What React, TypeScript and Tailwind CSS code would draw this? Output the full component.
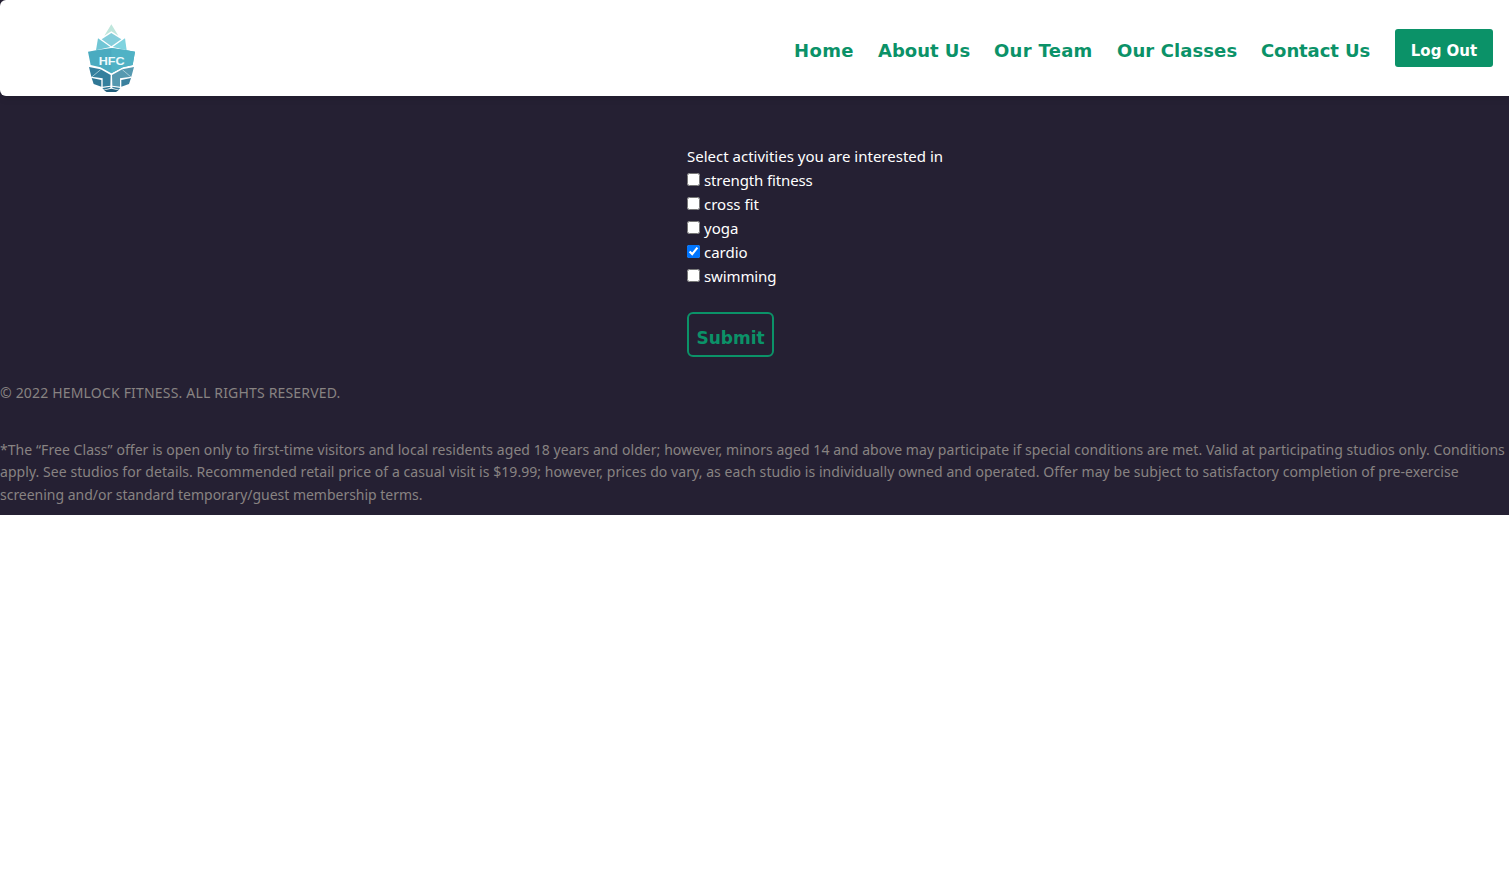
function Logo() {
  return (
    <svg viewBox="0 0 210 228" className="h-[76px] w-[70px]" aria-label="HFC">
      <polygon points="106,25 127,59 106,46 85,59" fill="#bfe6dc" />
      <polygon points="106,51 136,70 106,91 77,70" fill="#84cedb" />
      <polygon points="66,67 103,93 60,103" fill="#70c6d5" />
      <polygon points="147,67 110,93 152,103" fill="#7fd3df" />
      <polygon points="36,107 60,103 106,96 152,103 177,107 170,147 140,154 106,172 73,154 44,147" fill="#4aabc0" />
      <polygon points="106,96 152,103 177,107 170,147 140,154 106,172" fill="#50b2c5" />
      <polygon points="39,153 74,160 104,177 103,209 80,212 80,187 46,182" fill="#347f9d" />
      <polygon points="174,153 139,160 108,177 109,209 132,212 132,187 166,182" fill="#5599b0" />
      <polygon points="47,186 76,192 76,212 53,204" fill="#2f7795" />
      <polygon points="165,186 136,192 136,212 159,204" fill="#3b819e" />
      <polygon points="79,216 103,212 103,216 84,221" fill="#2f7795" />
      <polygon points="133,216 109,212 109,216 128,221" fill="#3b819e" />
      <polygon points="84,223 106,218 128,223 120,228 92,228" fill="#225f7c" />
      <path d="M46 184L74 161M166 184L139 161" stroke="#cfe5ec" strokeWidth="2" />
      <text x="107" y="147" textAnchor="middle" textLength="78" lengthAdjust="spacingAndGlyphs" fontFamily="Liberation Sans, sans-serif" fontWeight="700" fontSize="34" fill="#eefafc">
        HFC
      </text>
    </svg>
  );
}

const links = [
  { name: "Home", box: "w-[84px] tracking-[0.35px]" },
  { name: "About Us", box: "w-[116px] tracking-[0px]" },
  { name: "Our Team", box: "w-[123px] tracking-[0.3px]" },
  { name: "Our Classes", box: "w-[144px] tracking-[0.1px]" },
  { name: "Contact Us", box: "w-[134px] tracking-[-0.1px]" },
];

const activities = [
  { name: "strength fitness", checked: false, spacing: "tracking-[-0.12px]" },
  { name: "cross fit", checked: false, spacing: "tracking-[0px]" },
  { name: "yoga", checked: false, spacing: "tracking-[0px]" },
  { name: "cardio", checked: true, spacing: "tracking-[0px]" },
  { name: "swimming", checked: false, spacing: "tracking-[-0.12px]" },
];

export default function App() {
  return (
    <div className="min-h-[880px] bg-white font-['Noto_Sans',sans-serif]">
      <div className="h-[515px] bg-[#252033]">
        <header className="flex h-24 items-start justify-between rounded-l-md bg-white pr-4 pl-[76px] shadow-[0_1px_8px_rgba(0,0,0,0.15)]">
          <div className="pt-4">
            <Logo />
          </div>
          <nav className="flex items-start pt-[29px] font-['DejaVu_Sans',sans-serif] font-bold">
            {links.map((link) => (
              <a
                key={link.name}
                href="#"
                className={`${link.box} pt-[10px] pl-3 text-[18px] leading-6 whitespace-nowrap text-[#0b9268]`}
              >
                {link.name}
              </a>
            ))}
            <button className="ml-3 h-[38px] w-[98px] rounded-[3px] bg-[#0b9268] pt-[5px] text-[15px] leading-5 whitespace-nowrap text-white">
              Log Out
            </button>
          </nav>
        </header>
        <form className="ml-[687px] pt-12 text-[15px] leading-6 text-white" onSubmit={(e) => e.preventDefault()}>
          <p className="whitespace-nowrap">Select activities you are interested in</p>
          {activities.map((a) => (
            <label key={a.name} className="flex h-6 items-start">
              <input type="checkbox" defaultChecked={a.checked} className="mt-[5px] mr-1 h-[13px] w-[13px]" />
              <span className={a.spacing}>{a.name}</span>
            </label>
          ))}
          <button className="mt-6 h-[45px] w-[87px] rounded-md border-2 border-[#0b9268] pt-[7px] font-['DejaVu_Sans',sans-serif] text-[17px] leading-6 font-bold text-[#0b9268]">
            Submit
          </button>
        </form>
        <footer className="pt-[25px] text-[14px] leading-[22.5px] whitespace-nowrap text-[#888382]">
          <p className="tracking-[0.18px]">© 2022 HEMLOCK FITNESS. ALL RIGHTS RESERVED.</p>
          <div className="pt-[34px]">
            <p className="tracking-[0.06px]">
              *The “Free Class” offer is open only to first-time visitors and local residents aged 18 years and older; however, minors aged 14 and above may participate if special conditions are met. Valid at participating studios only. Conditions
            </p>
            <p className="tracking-[0.06px]">
              apply. See studios for details. Recommended retail price of a casual visit is $19.99; however, prices do vary, as each studio is individually owned and operated. Offer may be subject to satisfactory completion of pre-exercise
            </p>
            <p className="tracking-[-0.02px]">screening and/or standard temporary/guest membership terms.</p>
          </div>
        </footer>
      </div>
    </div>
  );
}
